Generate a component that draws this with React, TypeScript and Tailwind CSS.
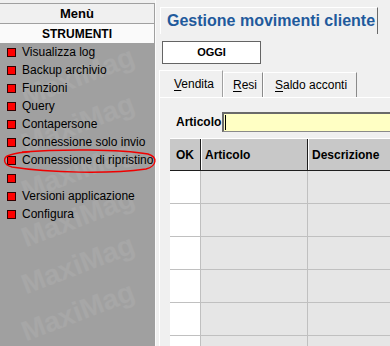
import React from "react";

const items = [
  "Visualizza log",
  "Backup archivio",
  "Funzioni",
  "Query",
  "Contapersone",
  "Connessione solo invio",
  "Connessione di ripristino",
  "",
  "Versioni applicazione",
  "Configura",
];

const wm = [77, 124, 171, 218, 265, 312];

export default function App() {
  return (
    <div className="relative flex w-[390px] h-[346px] overflow-hidden bg-[#f0f0f0] font-['Liberation_Sans',Arial,sans-serif] text-black">
      {/* Left menu */}
      <div className="w-[155px] shrink-0 flex flex-col">
        <div className="h-[3px] shrink-0" />
        <div className="h-[21px] shrink-0 border-y border-r border-[#a0a0a0] bg-[#f0f0f0] flex items-center justify-center font-bold text-[13px] leading-none">
          Menù
        </div>
        <div className="h-[19px] shrink-0 border-r border-[#a0a0a0] bg-[#fafafa] flex items-center justify-center font-bold text-[12px] leading-none">
          STRUMENTI
        </div>
        <div className="relative flex-1 bg-[#a0a0a0] overflow-hidden">
          {wm.map((y) => (
            <div
              key={y}
              className="absolute left-[78px] font-bold text-[28px] leading-none text-white/[0.07] whitespace-nowrap -translate-x-1/2 -translate-y-1/2 -rotate-[21deg] font-['Liberation_Sans',Arial,sans-serif] select-none"
              style={{ top: y - 43 }}
            >
              MaxiMag
            </div>
          ))}
          <div className="relative flex flex-col">
            {items.map((t, i) => (
              <div key={i} className="h-[18px] flex items-center pl-[7px] gap-[6px] text-[12px] leading-none">
                <span className="w-[9px] h-[9px] bg-[#ff0000] border border-[#300000] shrink-0" />
                <span>{t}</span>
              </div>
            ))}
          </div>
        </div>
      </div>

      {/* Right panel */}
      <div className="flex-1 flex flex-col border-l border-[#fbfbfb] min-w-0">
        <div className="pt-[7px] pl-[4px] shrink-0">
          <div className="w-[218px] h-[27px] border-t border-l border-white border-r border-r-[#696969] flex items-center pl-[6px]">
            <span className="text-[16px] font-bold text-[#1f5a9c] leading-none">
              Gestione movimenti cliente
            </span>
          </div>
        </div>
        <div className="mt-[7px] ml-[6px] w-[99px] h-[23px] shrink-0 border border-[#646464] bg-white flex items-center justify-center font-bold text-[11px] leading-none">
          OGGI
        </div>
        <div className="mt-[6px] ml-[3px] flex items-end h-[27px] shrink-0">
          <div className="w-[64px] h-[27px] border-t border-l border-white border-r border-r-[#a0a0a0] pl-[14px] pt-[7px] text-[12px] leading-none">
            <span className="underline underline-offset-[2px] decoration-1">V</span>endita
          </div>
          <div className="w-[40px] h-[25px] border-t border-l border-white border-r border-r-[#8a8a8a] pl-[9px] pt-[6px] text-[12px] leading-none">
            <span className="underline underline-offset-[2px] decoration-1">R</span>esi
          </div>
          <div className="w-[94px] h-[25px] border-t border-l border-white border-r border-r-[#8a8a8a] pl-[11px] pt-[6px] text-[12px] leading-none">
            <span className="underline underline-offset-[2px] decoration-1">S</span>aldo acconti
          </div>
        </div>
        <div className="flex-1 ml-[3px] border-t border-l border-white flex flex-col min-h-0">
          <div className="mt-[14px] flex items-center h-[20px] shrink-0">
            <span className="ml-[16px] w-[46px] font-bold text-[12px] leading-none">Articolo</span>
            <div className="flex-1 h-[20px] bg-[#ffffc4] border-t-2 border-l-2 border-b border-[#6a6a6a] border-b-[#8a8a8a] relative">
              <div className="absolute left-[1px] top-[1px] w-[1px] h-[15px] bg-black" />
            </div>
          </div>
          <div className="mt-[6px] ml-[10px] flex-1 flex flex-col min-h-0 overflow-hidden">
            <div className="h-[33px] shrink-0 flex bg-[#c8c8c8] border-t border-white border-b border-b-[#1e1e1e] font-bold text-[12px] leading-none">
              <div className="w-[31px] border-r border-[#1e1e1e] flex items-center justify-center">OK</div>
              <div className="w-[107px] border-l border-white border-r border-r-[#1e1e1e] flex items-center pl-[3px]">Articolo</div>
              <div className="flex-1 border-l border-white flex items-center pl-[3px]">Descrizione</div>
            </div>
            {[0, 1, 2, 3, 4, 5].map((r) => (
              <div key={r} className="h-[33px] shrink-0 flex border-b border-[#c0c0c0]">
                <div className="w-[31px] bg-white border-r border-[#c0c0c0]" />
                <div className="w-[107px] bg-[#e6e6e6] border-r border-[#c0c0c0]" />
                <div className="flex-1 bg-[#e6e6e6]" />
              </div>
            ))}
          </div>
        </div>
      </div>

      {/* Red annotation */}
      <svg className="absolute left-0 top-0 pointer-events-none" width="170" height="200" viewBox="0 0 170 200">
        <path
          d="M22 152 C 60 149, 120 149, 148 154 C 158 157, 157 166, 146 169 C 110 174, 50 173, 12 167 C 3 165, 2 157, 10 155 C 16 153, 22 152, 30 152"
          fill="none"
          stroke="#f00000"
          strokeWidth="1.4"
        />
      </svg>
    </div>
  );
}
